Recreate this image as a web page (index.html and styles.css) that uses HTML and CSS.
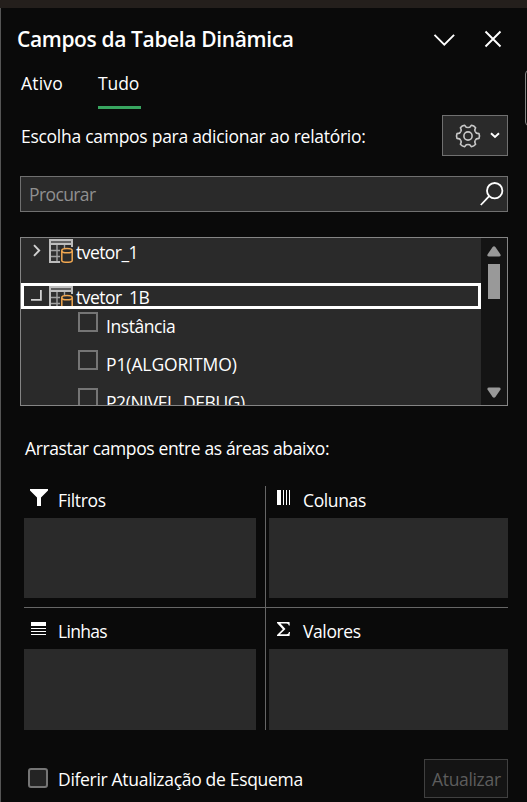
FILE: index.html
```html
<!DOCTYPE html>
<html lang="pt-BR">
<head>
<meta charset="utf-8">
<title>Campos da Tabela Dinâmica</title>
<link rel="stylesheet" href="styles.css">
</head>
<body>
<svg class="defs" width="0" height="0">
  <symbol id="table" viewBox="0 0 24 24">
    <rect x="1" y="6" width="10" height="17" fill="#303030"/>
    <path d="M0 0h24v8h-2V6H2v16h9v2H0z" fill="#bdbdbd"/>
    <rect x="2" y="2" width="20" height="2" fill="#606060"/>
    <path d="M2 11.500h9M2 17.500h9M8 6v16M15.500 6v3" stroke="#a0a0a0" stroke-width="1.400" fill="none"/>
    <path d="M12.800 11.500v10c0 1 2.300 1.800 5.200 1.800s5.200-.8 5.200-1.800v-10" fill="#2a2a2a" stroke="#f2a851" stroke-width="1.500"/>
    <ellipse cx="18" cy="11.700" rx="5.200" ry="2.100" fill="#2a2a2a" stroke="#f2a851" stroke-width="1.500"/>
  </symbol>
  <symbol id="tooth" overflow="visible">
    <path d="M7.300-4.220 8.500-2.900 11-2.400Q12 0 11 2.400L8.500 2.900 7.300 4.220" fill="none" stroke="#c8c8c8" stroke-width="1.600" stroke-linejoin="round"/>
  </symbol>
</svg>
<div class="ribbon"></div>
<main class="pane">
  <header class="head">
    <h1>Campos da Tabela Dinâmica</h1>
    <svg class="collapse" width="22" height="14" viewBox="0 0 22 14"><path d="M1.500 1.800 11.300 11.600 21.100 1.800" fill="none" stroke="#fff" stroke-width="1.900"/></svg>
    <svg class="close" width="18" height="18" viewBox="0 0 18 18"><path d="M1.500 1.500l15 15M16.500 1.500l-15 15" fill="none" stroke="#fff" stroke-width="1.900"/></svg>
  </header>
  <nav class="tabs">
    <span class="tab t-ativo">Ativo</span>
    <span class="tab active">Tudo</span>
  </nav>
  <div class="choose">
    <span class="t-choose">Escolha campos para adicionar ao relatório:</span>
    <div class="tools">
      <svg width="26" height="26" viewBox="-13 -13 26 26">
        <use href="#tooth"/>
        <use href="#tooth" transform="rotate(60)"/>
        <use href="#tooth" transform="rotate(120)"/>
        <use href="#tooth" transform="rotate(180)"/>
        <use href="#tooth" transform="rotate(240)"/>
        <use href="#tooth" transform="rotate(300)"/>
        <circle r="4.100" fill="none" stroke="#c8c8c8" stroke-width="1.600"/>
      </svg>
      <svg width="10" height="7" viewBox="0 0 10 7"><path d="M1 1.200l4 3.800 4-3.800" fill="none" stroke="#fff" stroke-width="1.900"/></svg>
    </div>
  </div>
  <div class="search">
    <span class="t-search">Procurar</span>
    <svg width="24" height="25" viewBox="0 0 24 25" fill="none" stroke="#fff" stroke-width="1.800"><circle cx="14.700" cy="8.700" r="7.700"/><path d="M9.200 14.200.8 23"/></svg>
  </div>
  <section class="list">
    <div class="rows">
      <div class="row first">
        <svg class="arrow" width="8" height="14" viewBox="0 0 8 14"><path d="M1 1.200 6.200 6.500 1 11.800" fill="none" stroke="#d0d0d0" stroke-width="1.900"/></svg>
        <svg class="tbl" width="24" height="24"><use href="#table"/></svg>
        <span class="t-v1">tvetor_1</span>
      </div>
      <div class="row selected">
        <svg class="open" width="11" height="11" viewBox="0 0 11 11"><path d="M0 9.900h9.900V0" fill="none" stroke="#d0d0d0" stroke-width="1.800"/></svg>
        <svg class="tbl" width="24" height="24"><use href="#table"/></svg>
        <span class="t-v1b">tvetor_1B</span>
      </div>
      <div class="field"><i class="check"></i><span class="t-inst">Instância</span></div>
      <div class="field"><i class="check"></i><span class="t-p1">P1(ALGORITMO)</span></div>
      <div class="field"><i class="check"></i><span class="t-p2">P2(NIVEL_DEBUG)</span></div>
    </div>
    <div class="scroll">
      <svg width="14" height="11" viewBox="0 0 14 11"><path d="M5.600 1Q7-.6 8.400 1L13.500 8.500Q14 10.500 12 10.500H2Q0 10.500.5 8.500z" fill="#999"/></svg>
      <div class="thumb"></div>
      <svg class="down" width="14" height="11" viewBox="0 0 14 11"><path d="M5.600 10Q7 11.600 8.400 10L13.500 2.500Q14 .5 12 .5H2Q0 .5.5 2.500z" fill="#999"/></svg>
    </div>
  </section>
  <p class="drag"><span class="t-drag">Arrastar campos entre as áreas abaixo:</span></p>
  <section class="areas">
    <div class="area left">
      <div class="label"><svg width="20" height="18" viewBox="0 0 20 18"><path d="M1 0h18v1.500L12 8.500V17H8V8.500L1 1.500z" fill="#fff"/></svg><span class="t-fil">Filtros</span></div>
      <div class="drop"></div>
    </div>
    <div class="area right">
      <div class="label"><svg width="20" height="18" viewBox="0 0 20 18"><path d="M3 1h4v15H3zM9 1h1v15H9zM12 1h1v15h-1zM15 1h1v15h-1z" fill="#fff"/></svg><span class="t-col">Colunas</span></div>
      <div class="drop"></div>
    </div>
    <div class="area left low">
      <div class="label"><svg width="20" height="18" viewBox="0 0 20 18"><path d="M2 2h15v4H2zM2 8h15v1H2zM2 11h15v1H2zM2 14h15v1H2z" fill="#fff"/></svg><span class="t-lin">Linhas</span></div>
      <div class="drop"></div>
    </div>
    <div class="area right low">
      <div class="label"><svg width="20" height="18" viewBox="0 0 20 18"><path d="M3 2h12.500l.3 3.500h-1Q14.500 3.400 12.500 3.400H6.500L11.500 9 6 14.300h6.500q2 0 2.500-2.300h1l-.5 4H3v-1L8.800 9.300 3 3z" fill="#fff"/></svg><span class="t-val">Valores</span></div>
      <div class="drop"></div>
    </div>
  </section>
  <footer class="foot">
    <i class="check round"></i><span class="t-defer">Diferir Atualização de Esquema</span>
    <div class="update"><span class="t-upd">Atualizar</span></div>
  </footer>
</main>
<div class="edge"></div>
</body>
</html>
```
FILE: styles.css
```css
* { box-sizing: border-box; }
body { margin: 0; width: 527px; height: 802px; overflow: hidden; background: #0a0a0a; color: #fff; font: 17.500px/24px "Open Sans", "Noto Sans", sans-serif; position: relative; }
svg { display: block; flex: none; }
.defs { position: absolute; }
span, h1 { white-space: nowrap; }
.ribbon { height: 8px; background: #241f1c; }
.pane { height: 794px; border-left: 1px solid #555; padding: 0 19px; }
.head { display: flex; height: 62px; padding-top: 17px; margin-left: -3px; align-items: flex-start; }
h1 { margin: 0; font-size: 21px; line-height: 28px; font-weight: 600; letter-spacing: -.37px; flex: 1; }
.collapse { margin: 8px 29px 0 0; }
.close { margin: 5px 6px 0 0; }
.tabs { display: flex; height: 39px; padding-left: 1px; }
.tab { height: 39px; padding-top: 1px; }
.tab:first-child { width: 77px; }
.active { width: 43px; border-bottom: 3px solid #38a660; letter-spacing: -.1px; }
.choose { display: flex; height: 47px; margin-top: 6px; justify-content: space-between; padding-left: 1px; }
.choose > span { padding-top: 9px; }
.tools { width: 66px; height: 41px; background: #2a2a2a; border: 1px solid #707070; display: flex; align-items: center; padding-left: 12px; gap: 9px; }
.search { height: 36px; margin-top: 14px; background: #2a2a2a; border: 1px solid #707070; display: flex; justify-content: space-between; padding: 5px 3px 0 8px; color: #909090; }
.list { margin-top: 25px; height: 169px; border: 1px solid #858585; display: flex; background: #2a2a2a; overflow: hidden; }
.rows { width: 460px; overflow: hidden; }
.row { display: flex; align-items: flex-start; }
.first { height: 45px; padding: 1px 0 0 12px; }
.first .arrow { margin: 5px 8px 0 0; }
.row .tbl { margin-right: 3px; }
.first span { padding-top: 1px; }
.selected { height: 26px; border: 3px solid #fff; padding-left: 7px; overflow: hidden; }
.open { margin: 4px 7px 0 0; }
.selected span { margin-top: -1px; }
.field { height: 38px; padding: 3px 0 0 57px; display: flex; }
.check { width: 20px; height: 20px; border: 2px solid #757575; flex: none; }
.field span { margin: 2px 0 0 8px; }
.scroll { flex: 1; background: #141414; display: flex; flex-direction: column; align-items: center; padding: 8px 0 7px; }
.thumb { width: 12px; height: 35px; background: #999; margin-top: 7px; }
.down { margin-top: auto; }
.drag { margin: 30px 0 0 5px; height: 50px; }
.areas { display: grid; grid-template-columns: 242px 242px; grid-template-rows: 122px 122px; margin-left: 4px; }
.area { display: flex; flex-direction: column; }
.left { border-right: 1px solid #666; padding-right: 9px; }
.right { padding-left: 3px; }
.label { height: 32px; display: flex; padding: 2px 0 0 5px; }
.label svg { margin-top: 1px; }
.label span { margin-left: 9px; }
.drop { height: 80px; background: #2a2a2a; }
.area:not(.low) { border-bottom: 1px solid #666; }
.low .label { height: 41px; padding-top: 11px; }
.low .drop { height: 81px; }
.foot { display: flex; height: 39px; margin-top: 29px; padding-left: 8px; }
.round { border-radius: 3px; margin-top: 9px; background: #242424; }
.foot > span { margin: 8px 0 0 10px; flex: 1; }
.update { width: 84px; height: 39px; border: 1px solid #404040; background: #141414; color: #5d5d5d; padding: 7px 0 0 7px; }
.edge { position: absolute; right: -7px; top: 70px; width: 9px; height: 56px; border: 1px solid #858585; border-radius: 4px; }

.t-ativo { letter-spacing: .2px; }
.t-choose { letter-spacing: -.275px; }
.t-search { letter-spacing: -.6px; }
.t-v1 { letter-spacing: -.55px; }
.t-v1b { letter-spacing: -.5px; }
.t-inst { letter-spacing: -.43px; }
.t-p1 { letter-spacing: -.1px; }
.t-p2 { letter-spacing: -.42px; }
.t-drag { letter-spacing: -.38px; }
.t-fil { letter-spacing: -.35px; }
.t-col { letter-spacing: -.37px; }
.t-lin { letter-spacing: -.68px; }
.t-val { letter-spacing: -.4px; }
.t-defer { letter-spacing: -.31px; }
.t-upd { letter-spacing: -.33px; }
```
